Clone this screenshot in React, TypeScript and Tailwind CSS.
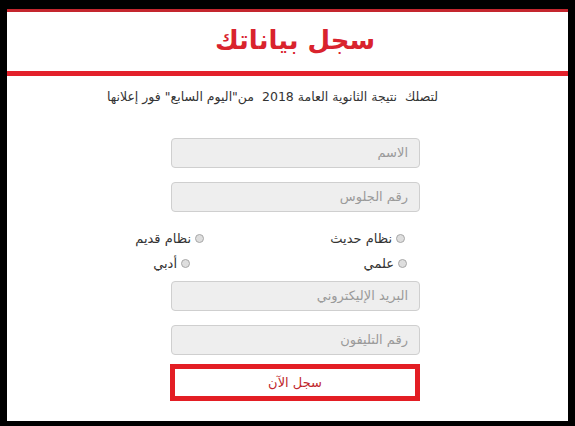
import { useState } from 'react'

const ar = { fontFamily: '"DejaVu Sans", "Noto Sans", sans-serif' }

function Field({ placeholder }: { placeholder: string }) {
  return (
    <input
      placeholder={placeholder}
      className="block w-[249px] h-[30px] rounded-[4px] border border-[#cfcfcf] bg-[#eeeeee] px-[11px] text-[13px] text-[#555] placeholder:text-[#9a9a9a] outline-none"
      style={ar}
    />
  )
}

function Radio({ name, label, checked, onPick }: { name: string; label: string; checked: boolean; onPick: () => void }) {
  return (
    <label className="flex items-center gap-[4px] text-[13px] text-[#333] whitespace-nowrap cursor-pointer">
      <input
        type="radio"
        name={name}
        checked={checked}
        onChange={onPick}
        className="appearance-none w-[9px] h-[9px] m-0 rounded-full border border-[#a8a8a8] bg-[#dedede] checked:bg-[#777] shrink-0"
      />
      <span>{label}</span>
    </label>
  )
}

export default function App() {
  const [system, setSystem] = useState('')
  const [branch, setBranch] = useState('')

  return (
    <div className="w-[575px] h-[426px] bg-black pt-[9px] px-[7px] pb-[5px]" style={ar}>
      <div className="h-full bg-white border-t-[3px] border-[#c4262e]">
        <div className="h-[64px] flex items-center justify-center border-b-[5px] border-[#e3212b] pl-[15px] pb-[3px]">
          <h1 className="text-[26px] font-bold text-[#d9232d] leading-none" dir="rtl">سجل بياناتك</h1>
        </div>
        <p className="mt-[12px] text-center text-[12.5px] text-[#333] pr-[30px] whitespace-pre" dir="rtl">
          لتصلك  نتيجة الثانوية العامة 2018  من"اليوم السابع" فور إعلانها
        </p>

        <form dir="rtl" className="ml-[164px] w-[249px] mt-[31px]" onSubmit={e => e.preventDefault()}>
          <Field placeholder="الاسم" />
          <div className="h-[14px]" />
          <Field placeholder="رقم الجلوس" />

          <div className="flex pr-[15px] mt-[18px] h-[18px] items-center">
            <div className="w-[201px] shrink-0"><Radio name="system" label="نظام حديث" checked={system === 'new'} onPick={() => setSystem('new')} /></div>
            <Radio name="system" label="نظام قديم" checked={system === 'old'} onPick={() => setSystem('old')} />
          </div>
          <div className="flex pr-[13px] mt-[7px] h-[18px] items-center">
            <div className="w-[217px] shrink-0"><Radio name="branch" label="علمي" checked={branch === 'sci'} onPick={() => setBranch('sci')} /></div>
            <Radio name="branch" label="أدبي" checked={branch === 'lit'} onPick={() => setBranch('lit')} />
          </div>

          <div className="h-[8px]" />
          <Field placeholder="البريد الإليكتروني" />
          <div className="h-[14px]" />
          <Field placeholder="رقم التليفون" />

          <button type="submit" className="mt-[9px] block w-[250px] h-[37px] border-[5px] border-[#e31e24] bg-white text-[13px] text-[#c0272d]" style={ar}>
            سجل الآن
          </button>
        </form>
      </div>
    </div>
  )
}
